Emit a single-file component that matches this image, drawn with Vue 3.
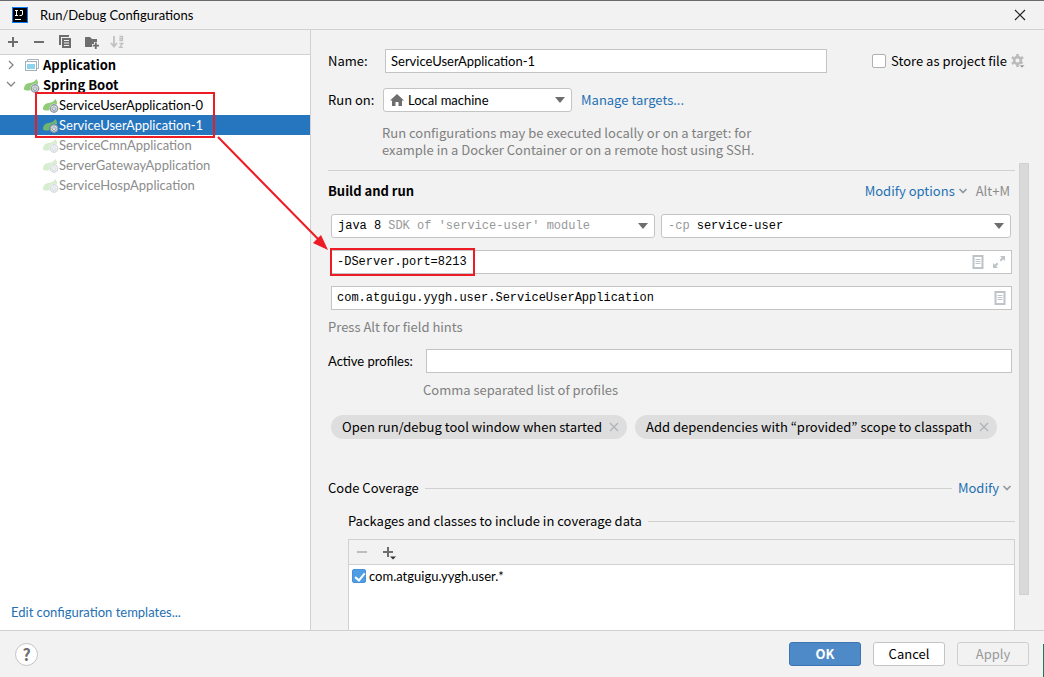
<script setup>
import { ref } from 'vue'

const configurations = [
  { name: 'ServiceUserApplication-0', state: '' },
  { name: 'ServiceUserApplication-1', state: 'selected' },
  { name: 'ServiceCmnApplication', state: 'temporary' },
  { name: 'ServerGatewayApplication', state: 'temporary' },
  { name: 'ServiceHospApplication', state: 'temporary' }
]

const chips = [
  'Open run/debug tool window when started',
  'Add dependencies with “provided” scope to classpath'
]

const name = ref('ServiceUserApplication-1')
const vmOptions = ref('-DServer.port=8213')
const mainClass = ref('com.atguigu.yygh.user.ServiceUserApplication')
const profiles = ref('')
const storeAsFile = ref(false)
const includePackage = ref(true)
</script>

<template>
  <div class="dialog">
    <svg class="defs" width="0" height="0" aria-hidden="true">
      <symbol id="spring" viewBox="0 0 16 16">
        <path d="M0 12.500C0 9 1.500 6.500 5.500 6C9 5.500 11 4.500 12.500 2C13.700 3.500 14.200 5.500 14 7.500C10.500 5.500 6.500 7.500 6.500 11.500V13C4 14 1.500 13.500 0 12.500Z" fill="#7cc35f" fill-opacity=".85" />
        <circle cx="11" cy="11.500" r="3.700" fill="#e3e7ea" stroke="#8f9da8" stroke-width="1.400" />
        <path d="M11 9.200V11.500M9.500 10.500a1.900 1.900 0 1 0 3 0" fill="none" stroke="#8f9da8" stroke-width="1" />
      </symbol>
      <symbol id="page" viewBox="0 0 12 14">
        <path d="M1.500 1H10.500V13H1.500Z" fill="none" stroke="#bdc3c7" stroke-width="2" />
        <path d="M3.500 4.500H8.500M3.500 6.500H8.500M3.500 8.500H8.500" stroke="#bdc3c7" />
      </symbol>
      <symbol id="chevron" viewBox="0 0 10 8">
        <path d="M1.500 2L5 5.500L8.500 2" fill="none" stroke="#9299a0" stroke-width="1.700" />
      </symbol>
    </svg>

    <header class="titlebar">
      <svg width="16" height="16" viewBox="0 0 16 16" aria-hidden="true">
        <rect x=".5" y=".5" width="15" height="15" fill="#000" stroke="#087cfa" />
        <path d="M3 3.500H6M4.500 3.500V8.500M3 8.500H6M8 3.500H10.500V7Q10.500 8.500 9 8.500H7.500M3 12.500H9" fill="none" stroke="#fff" />
      </svg>
      <h1>Run/Debug Configurations</h1>
      <button class="icon-button close" aria-label="Close">
        <svg width="12" height="12" viewBox="0 0 12 12"><path d="M1 1L11 11M11 1L1 11" stroke="#222" stroke-width="1.200" /></svg>
      </button>
    </header>

    <main class="body">
      <aside class="sidebar">
        <div class="toolbar">
          <button class="icon-button" aria-label="Add">
            <svg width="16" height="16" viewBox="0 0 16 16"><path d="M3 8H13M8 3V13" stroke="#6e6e6e" stroke-width="2" /></svg>
          </button>
          <button class="icon-button" aria-label="Remove">
            <svg width="16" height="16" viewBox="0 0 16 16"><path d="M3 8H13" stroke="#6e6e6e" stroke-width="2" /></svg>
          </button>
          <button class="icon-button" aria-label="Copy">
            <svg width="16" height="16" viewBox="0 0 16 16"><path d="M2 1H12V3H4V11H2Z" fill="#6e6e6e" /><path d="M5 4H14V14H5ZM7 6V7H12V6ZM7 8.500V9.500H12V8.500ZM7 11V12H12V11Z" fill="#6e6e6e" fill-rule="evenodd" /></svg>
          </button>
          <button class="icon-button" aria-label="New folder">
            <svg width="16" height="16" viewBox="0 0 16 16"><path d="M2 3H7L9 5H14V8H11V10H9V13H2Z" fill="#6e6e6e" /><path d="M12.800 8.500V15M9.700 11.700H16" stroke="#6e6e6e" stroke-width="1.800" /></svg>
          </button>
          <button class="icon-button" aria-label="Sort configurations" disabled>
            <svg width="16" height="16" viewBox="0 0 16 16"><path d="M5 2V12.500M2 9L5 12.500L8 9" fill="none" stroke="#c1c1c1" stroke-width="1.800" /><path d="M10.500 2.500H13.500V6.500H11V4.500H13.500M10.500 9.500H13.700L10.700 13.300H14" fill="none" stroke="#c1c1c1" stroke-width="1.300" /></svg>
          </button>
        </div>
        <ul class="tree">
          <li class="row group">
            <svg width="10" height="10" viewBox="0 0 10 10"><path d="M3 1L7 5L3 9" fill="none" stroke="#7f8488" stroke-width="1.300" /></svg>
            <svg class="kind" width="16" height="16" viewBox="0 0 16 16"><path d="M3.500 4V2.500H14.500V11.500H13" fill="none" stroke="#a8b4bc" /><rect x="1.500" y="4.500" width="11" height="9" fill="#fff" stroke="#a3b0b9" /><path d="M3 7H11V12H3Z" fill="#8cd3ec" /></svg>
            Application
          </li>
          <li class="row group">
            <svg width="10" height="10" viewBox="0 0 10 10"><path d="M1 2L5 6L9 2" fill="none" stroke="#7f8488" stroke-width="1.300" /></svg>
            <svg class="kind" width="16" height="16"><use href="#spring" /></svg>
            Spring Boot
          </li>
          <li v-for="item in configurations" :key="item.name" class="row leaf" :class="item.state">
            <svg width="16" height="16"><use href="#spring" /></svg>{{ item.name }}
          </li>
        </ul>
        <a class="templates" href="#">Edit configuration templates...</a>
      </aside>

      <section class="editor">
        <div class="general">
          <div class="name-line">
            <label class="caption" for="name">Name:</label>
            <input id="name" v-model="name" class="field" type="text" />
            <label class="store"><input v-model="storeAsFile" class="check" type="checkbox" />Store as project file</label>
            <button class="icon-button" aria-label="Storage settings">
              <svg width="16" height="16" viewBox="0 0 16 16"><circle cx="7.500" cy="7.500" r="3.400" fill="none" stroke="#bbb" stroke-width="2.600" /><path d="M7.500 1V3.500M7.500 11.500V14M1.900 4.200L4 5.500M11 9.500L12.500 10.500M1.900 10.800L4 9.500M11 5.500L13.100 4.200" stroke="#bbb" stroke-width="2.600" /><path d="M9 12H15L12 15Z" fill="#999" stroke="#f2f2f2" stroke-width=".6" /></svg>
            </button>
          </div>
          <div class="target-line">
            <label class="caption" for="target">Run on:</label>
            <div class="combo target">
              <svg width="14" height="14" viewBox="0 0 14 14"><path d="M7 1L14 7.500H12V13H8.500V9H5.500V13H2V7.500H0Z" fill="#6e6e6e" /></svg>
              <select id="target"><option>Local machine</option></select>
              <svg class="caret" width="10" height="6" viewBox="0 0 10 6"><path d="M0 0H10L5 6Z" fill="#6e6e6e" /></svg>
            </div>
            <a href="#">Manage targets...</a>
          </div>
          <p class="hint target-hint">Run configurations may be executed locally or on a target: for<br />example in a Docker Container or on a remote host using SSH.</p>
        </div>

        <div class="scroll">
          <div class="content">
            <div class="build-head">
              <h2>Build and run</h2>
              <a href="#">Modify options</a>
              <svg width="10" height="8"><use href="#chevron" /></svg>
              <span class="hint">Alt+M</span>
            </div>
            <div class="fields">
              <div class="pair">
                <div class="combo mono jre">
                  <label for="jre">java 8</label>
                  <select id="jre" class="muted"><option>SDK of 'service-user' module</option></select>
                  <svg class="caret" width="10" height="6" viewBox="0 0 10 6"><path d="M0 0H10L5 6Z" fill="#6e6e6e" /></svg>
                </div>
                <div class="combo mono classpath">
                  <label class="muted" for="module">-cp</label>
                  <select id="module"><option>service-user</option></select>
                  <svg class="caret" width="10" height="6" viewBox="0 0 10 6"><path d="M0 0H10L5 6Z" fill="#6e6e6e" /></svg>
                </div>
              </div>
              <div class="field mono boxed vm">
                <input v-model="vmOptions" type="text" aria-label="VM options" />
                <button class="icon-button" aria-label="Insert macro"><svg width="12" height="14"><use href="#page" /></svg></button>
                <button class="icon-button" aria-label="Expand"><svg width="14" height="14" viewBox="0 0 14 14"><path d="M8 1H13V6L11.200 4.200L9 6.400L7.600 5L9.800 2.800ZM6 13H1V8L2.800 9.800L5 7.600L6.400 9L4.200 11.200Z" fill="#bdc3c7" /></svg></button>
              </div>
              <div class="field mono boxed">
                <input v-model="mainClass" type="text" aria-label="Main class" />
                <button class="icon-button" aria-label="Browse classes"><svg width="12" height="14"><use href="#page" /></svg></button>
              </div>
            </div>
            <p class="hint alt-hint">Press Alt for field hints</p>
            <div class="profile-line">
              <label for="profiles">Active profiles:</label>
              <input id="profiles" v-model="profiles" class="field" type="text" />
            </div>
            <p class="hint profile-hint">Comma separated list of profiles</p>
            <div class="chips">
              <span v-for="chip in chips" :key="chip" class="chip">{{ chip }}
                <button class="icon-button" :aria-label="'Remove ' + chip"><svg width="10" height="10" viewBox="0 0 10 10"><path d="M1 1L9 9M9 1L1 9" stroke="#aeb2b5" stroke-width="1.200" /></svg></button>
              </span>
            </div>
            <div class="coverage-head">
              <h3>Code Coverage</h3><span class="rule"></span>
              <a href="#">Modify</a>
              <svg width="10" height="8"><use href="#chevron" /></svg>
            </div>
            <div class="coverage">
              <div class="packages-head"><h3>Packages and classes to include in coverage data</h3><span class="rule"></span></div>
              <div class="list">
                <div class="list-tools">
                  <button class="icon-button" aria-label="Remove package" disabled><svg width="16" height="16" viewBox="0 0 16 16"><path d="M3 8H13" stroke="#bdbdbd" stroke-width="2" /></svg></button>
                  <button class="icon-button" aria-label="Add package"><svg width="16" height="16" viewBox="0 0 16 16"><path d="M1 8H11M6 3V13" stroke="#6e6e6e" stroke-width="2" /><path d="M8 12.500H14L11 15.500Z" fill="#333" /></svg></button>
                </div>
                <label class="package"><input v-model="includePackage" class="check" type="checkbox" />com.atguigu.yygh.user.*</label>
              </div>
            </div>
          </div>
          <div class="thumb"></div>
        </div>
      </section>
    </main>

    <footer class="footer">
      <button class="help" aria-label="Help">?</button>
      <button class="action primary">OK</button>
      <button class="action">Cancel</button>
      <button class="action" disabled>Apply</button>
      <span class="edge"></span>
    </footer>

    <svg class="callout" width="480" height="280" viewBox="0 0 480 280" aria-hidden="true">
      <g fill="none" stroke="#ed1c24" stroke-width="2">
        <rect x="36" y="93" width="178" height="44" />
        <rect x="331" y="249" width="143" height="26" />
        <path d="M218 137L320 241" />
      </g>
      <path d="M328 250L313 243L321 235Z" fill="#ed1c24" />
    </svg>
  </div>
</template>

<style>
html,
body {
  margin: 0;
  background: #f2f2f2;
}
</style>

<style scoped>
.dialog {
  position: relative;
  box-sizing: border-box;
  display: flex;
  flex-direction: column;
  min-height: 100vh;
  border-top: 1px solid #6b696b;
  background: #f2f2f2;
  color: #000;
  font: 13px/20px "Noto Sans CJK KR", "Noto Sans", sans-serif;
}
.dialog * {
  box-sizing: border-box;
}
.defs {
  position: absolute;
}
h1, h2, h3, p, ul {
  margin: 0;
  padding: 0;
  font-size: 13px;
  font-weight: 400;
}
a {
  color: #2470b3;
  text-decoration: none;
}
button, input, select {
  margin: 0;
  font: inherit;
  color: inherit;
}
.titlebar h1, .leaf, .templates, #name, #target, .profile-line, .package {
  font-family: Lato, "Noto Sans", sans-serif;
}
.icon-button {
  display: flex;
  padding: 0;
  border: 0;
  background: none;
}
svg {
  flex: none;
}
.titlebar {
  display: flex;
  align-items: center;
  gap: 12px;
  height: 29px;
  padding: 0 18px 0 12px;
  border-bottom: 1px solid #d1d1d1;
}
.titlebar h1 {
  flex: 1;
}
.body {
  flex: 1;
  display: flex;
}
.sidebar {
  flex: none;
  display: flex;
  flex-direction: column;
  width: 311px;
  border-right: 1px solid #d1d1d1;
  background: #fff;
}
.toolbar {
  display: flex;
  align-items: center;
  gap: 10px;
  height: 25px;
  padding-left: 5px;
  border-bottom: 1px solid #d1d1d1;
  background: #f2f2f2;
}
.tree {
  flex: 1;
  list-style: none;
}
.row {
  display: flex;
  align-items: center;
  height: 20px;
  padding-left: 6px;
}
.group {
  font-weight: 700;
}
.kind {
  margin: 0 3px 0 8px;
}
.leaf {
  padding-left: 43px;
}
.selected {
  background: #2675bf;
  color: #fff;
}
.temporary {
  color: #8c8c8c;
}
.temporary svg {
  opacity: .35;
}
.templates {
  margin: 0 11px 8px;
}
.editor {
  flex: 1;
  min-width: 0;
  display: flex;
  flex-direction: column;
}
.general {
  height: 133px;
  padding: 19px 18px 0 17px;
}
.name-line, .target-line, .profile-line {
  display: flex;
  align-items: center;
}
.caption {
  width: 57px;
}
.field {
  height: 24px;
  border: 1px solid #c4c4c4;
  border-radius: 0;
  background: #fff;
  padding: 0 5px;
}
.name-line .field {
  flex: 1;
  min-width: 0;
}
.store {
  display: flex;
  align-items: center;
  gap: 5px;
  margin: 0 3px 0 45px;
}
.check {
  appearance: none;
  width: 14px;
  height: 14px;
  border: 1px solid #b0b0b0;
  border-radius: 2px;
  background: #fff;
}
.check:checked {
  border-color: #4a90d9;
  background: #4f9ee3;
}
.check:checked::after {
  content: "";
  display: block;
  width: 4px;
  height: 8px;
  margin: 1px 0 0 4px;
  border: solid #fff;
  border-width: 0 2px 2px 0;
  transform: rotate(40deg);
}
.target-line {
  margin-top: 15px;
}
.target-line .caption {
  width: 55px;
}
.combo {
  display: flex;
  align-items: center;
  height: 24px;
  padding: 0 6px;
  border: 1px solid #c4c4c4;
  border-radius: 3px;
  background: #fff;
}
.combo select {
  flex: 1;
  min-width: 0;
  padding: 0;
  border: 0;
  appearance: none;
  background: none;
}
.target {
  width: 189px;
  margin-right: 9px;
}
.target select {
  margin-left: 4px;
}
.hint {
  color: #808080;
}
.target-hint {
  margin: 12px 0 0 54px;
  line-height: 17px;
}
.scroll {
  flex: 1;
  display: flex;
  padding: 0 15px 0 17px;
}
.content {
  flex: 1;
  min-width: 0;
  display: flex;
  flex-direction: column;
  margin-top: 7px;
  border-top: 1px solid #d1d1d1;
}
.thumb {
  width: 10px;
  margin: 0 0 35px 4px;
  border: 1px solid #d1d1d1;
  background: #d9d9d9;
}
.build-head {
  display: flex;
  align-items: center;
  gap: 3px;
  margin: 10px 5px 0 0;
}
.build-head h2 {
  flex: 1;
  font-weight: 700;
}
.build-head .hint {
  margin-left: 5px;
  color: #8c8c8c;
}
.fields {
  display: flex;
  flex-direction: column;
  gap: 12px;
  margin: 13px 3px 0;
}
.pair {
  display: flex;
  gap: 6px;
  margin-right: 1px;
}
.jre {
  flex: 12 0 0;
}
.classpath {
  flex: 13 0 0;
}
.mono {
  font-family: "Liberation Mono", monospace;
  font-size: 12px;
}
.mono label {
  margin-right: 7px;
}
.muted {
  color: #999;
}
.boxed {
  display: flex;
  align-items: center;
  gap: 8px;
}
.boxed input {
  flex: 1;
  min-width: 0;
  padding: 0;
  border: 0;
  background: none;
}
.alt-hint {
  margin-top: 7px;
}
.profile-line {
  gap: 13px;
  margin: 12px 3px 0 0;
}
.profile-line .field {
  flex: 1;
  min-width: 0;
}
.profile-hint {
  margin: 7px 0 0 95px;
}
.chips {
  display: flex;
  gap: 8px;
  margin: 15px 3px 0;
}
.chip {
  display: flex;
  align-items: center;
  gap: 7px;
  height: 24px;
  padding: 0 8px 0 11px;
  border-radius: 12px;
  background: #dedede;
  white-space: nowrap;
}
.coverage-head {
  display: flex;
  align-items: center;
  gap: 3px;
  margin: 39px 3px 0 0;
}
.rule {
  flex: 1;
  height: 1px;
  background: #d1d1d1;
}
.coverage-head .rule {
  margin: 0 3px;
}
.coverage {
  flex: 1;
  display: flex;
  flex-direction: column;
  margin: 13px 0 0 20px;
}
.packages-head {
  display: flex;
  align-items: center;
  gap: 6px;
}
.list {
  flex: 1;
  margin-top: 8px;
  border: 1px solid #d1d1d1;
  border-bottom: 0;
  background: #fff;
}
.list-tools {
  display: flex;
  align-items: center;
  gap: 12px;
  height: 25px;
  padding-left: 5px;
  border-bottom: 1px solid #d1d1d1;
  background: #f2f2f2;
}
.package {
  display: flex;
  align-items: center;
  gap: 3px;
  padding: 1px 3px;
}
.footer {
  position: relative;
  display: flex;
  align-items: center;
  gap: 12px;
  height: 47px;
  padding: 0 15px;
  border-top: 1px solid #d1d1d1;
}
.help {
  width: 23px;
  height: 23px;
  margin-right: auto;
  padding: 0;
  border: 1px solid #c4c4c4;
  border-radius: 50%;
  background: #fff;
  color: #6e6e6e;
  font-size: 16px;
  font-weight: 700;
  line-height: 20px;
}
.action {
  width: 72px;
  height: 24px;
  padding: 0;
  border: 1px solid #c4c4c4;
  border-radius: 3px;
  background: #fff;
}
.action:disabled {
  border-color: #cfcfcf;
  background: #f2f2f2;
  color: #999;
}
.primary {
  border-color: #3d75b4;
  background: #4e8ac8;
  color: #fff;
  font-weight: 700;
}
.edge {
  position: absolute;
  right: 0;
  bottom: 0;
  width: 1px;
  height: 33px;
  background: #217558;
}
.callout {
  position: absolute;
  top: -1px;
  left: 0;
  pointer-events: none;
}
</style>
